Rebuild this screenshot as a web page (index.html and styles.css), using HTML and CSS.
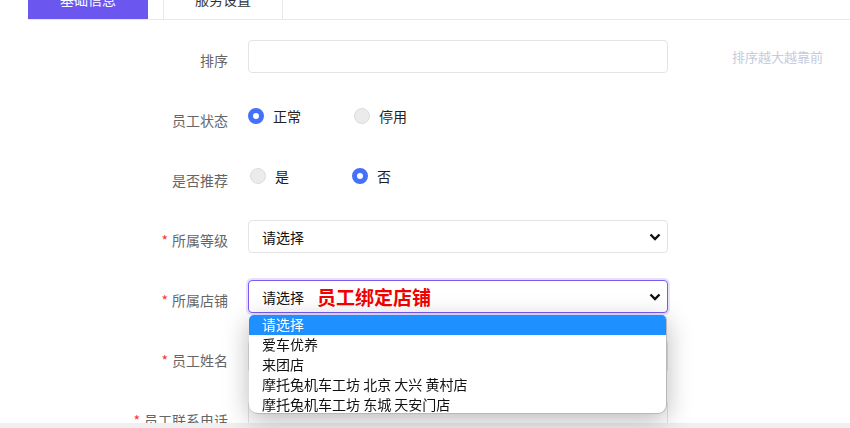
FILE: index.html
```html
<!DOCTYPE html>
<html lang="zh">
<head>
<meta charset="utf-8">
<link rel="stylesheet" href="styles.css">
</head>
<body>
<div class="page">
  <div class="tabs">
    <div class="tab active">基础信息</div>
    <div class="tab">服务设置</div>
  </div>
  <div class="form">
    <div class="row">
      <div class="label">排序</div>
      <div class="field"><div class="input"></div></div>
      <div class="hint">排序越大越靠前</div>
    </div>
    <div class="row">
      <div class="label">员工状态</div>
      <div class="field radios">
        <div class="opt"><span class="radio on"></span>正常</div>
        <div class="opt"><span class="radio"></span>停用</div>
      </div>
    </div>
    <div class="row">
      <div class="label">是否推荐</div>
      <div class="field radios r2">
        <div class="opt"><span class="radio"></span>是</div>
        <div class="opt"><span class="radio on"></span>否</div>
      </div>
    </div>
    <div class="row">
      <div class="label"><span class="req">*</span>所属等级</div>
      <div class="field">
        <div class="input select">请选择
          <svg class="chev" width="12" height="8" viewBox="0 0 12 8"><polyline points="1.5,1.5 6,6 10.5,1.5" fill="none" stroke="#111" stroke-width="2.4"/></svg>
        </div>
      </div>
    </div>
    <div class="row">
      <div class="label"><span class="req">*</span>所属店铺</div>
      <div class="field anchor">
        <div class="input select focus">请选择<span class="note">员工绑定店铺</span>
          <svg class="chev" width="12" height="8" viewBox="0 0 12 8"><polyline points="1.5,1.5 6,6 10.5,1.5" fill="none" stroke="#111" stroke-width="2.4"/></svg>
        </div>
        <div class="dropdown">
          <div class="item sel">请选择</div>
          <div class="item">爱车优养</div>
          <div class="item">来团店</div>
          <div class="item">摩托兔机车工坊 北京 大兴 黄村店</div>
          <div class="item">摩托兔机车工坊 东城 天安门店</div>
        </div>
      </div>
    </div>
    <div class="row">
      <div class="label"><span class="req">*</span>员工姓名</div>
      <div class="field"><div class="input"></div></div>
    </div>
    <div class="row">
      <div class="label"><span class="req">*</span>员工联系电话</div>
      <div class="field"><div class="input"></div></div>
    </div>
  </div>
</div>
<div class="bottombar"></div>
</body>
</html>
```
FILE: styles.css
```css
html, body {
  margin: 0;
  padding: 0;
  background: #fff;
  overflow: hidden;
}
body {
  font-family: "Noto Sans CJK SC", "Noto Sans", sans-serif;
  font-size: 14px;
  color: #222;
}
.page {
  margin-top: -21px;
}
.tabs {
  display: flex;
  margin-left: 28px;
  height: 40px;
  border-bottom: 1px solid #e8e8e8;
}
.tab {
  width: 118px;
  margin-left: 15px;
  border-left: 1px solid #e8e8e8;
  border-right: 1px solid #e8e8e8;
  text-align: center;
  line-height: 40px;
  font-size: 14px;
  color: #333;
}
.tab.active {
  width: 120px;
  margin-left: 0;
  border: none;
  background: #6b57f0;
  color: #fff;
}
.form {
  padding-top: 20px;
}
.row {
  display: flex;
  height: 60px;
}
.label {
  width: 248px;
  box-sizing: border-box;
  padding-right: 20px;
  padding-top: 4px;
  line-height: 33px;
  text-align: right;
  color: #666;
}
.req {
  color: #f33;
  margin-right: 4px;
}
.field {
  width: 420px;
}
.anchor {
  position: relative;
}
.input {
  box-sizing: border-box;
  height: 33px;
  border: 1px solid #e4e4e4;
  border-radius: 4px;
  background: #fff;
}
.select {
  display: flex;
  align-items: center;
  padding-left: 13px;
  padding-right: 6px;
  color: #111;
}
.chev {
  margin-left: auto;
}
.focus {
  border-color: #7a5cf5;
  box-shadow: 0 0 0 2px #e7e1ff;
}
.note {
  margin-left: 13px;
  color: #f20000;
  font-weight: bold;
  font-size: 19px;
}
.hint {
  margin-left: 64px;
  line-height: 33px;
  font-size: 13px;
  color: #c6cbdd;
}
.radios {
  display: flex;
  align-items: center;
  height: 33px;
  margin-top: -1px;
}
.opt {
  display: flex;
  align-items: center;
  width: 106px;
  color: #222;
}
.r2 .opt:first-child {
  width: 104px;
}
.radio {
  box-sizing: border-box;
  width: 16px;
  height: 16px;
  border-radius: 50%;
  background: #ebebeb;
  border: 1px solid #dcdcdc;
  margin-right: 9px;
}
.radio.on {
  background: #fff;
  border: 5px solid #4470fb;
}
.r2 .opt:first-child .radio {
  margin-left: 2px;
}
.dropdown {
  position: absolute;
  top: 35px;
  left: 1px;
  width: 418px;
  height: 99px;
  box-sizing: border-box;
  background: #fff;
  border-radius: 5px 5px 9px 9px;
  border-right: 1px solid #b8b8b8;
  border-bottom: 1px solid #b8b8b8;
  box-shadow: 0 6px 26px rgba(0, 0, 0, 0.28);
  overflow: hidden;
  z-index: 2;
}
.item {
  height: 20px;
  line-height: 19px;
  padding-left: 13px;
  color: #111;
}
.item.sel {
  background: #1e90ff;
  color: #fff;
}
.bottombar {
  position: fixed;
  left: 0;
  right: 0;
  bottom: 0;
  height: 5px;
  background: #efefef;
}
```
